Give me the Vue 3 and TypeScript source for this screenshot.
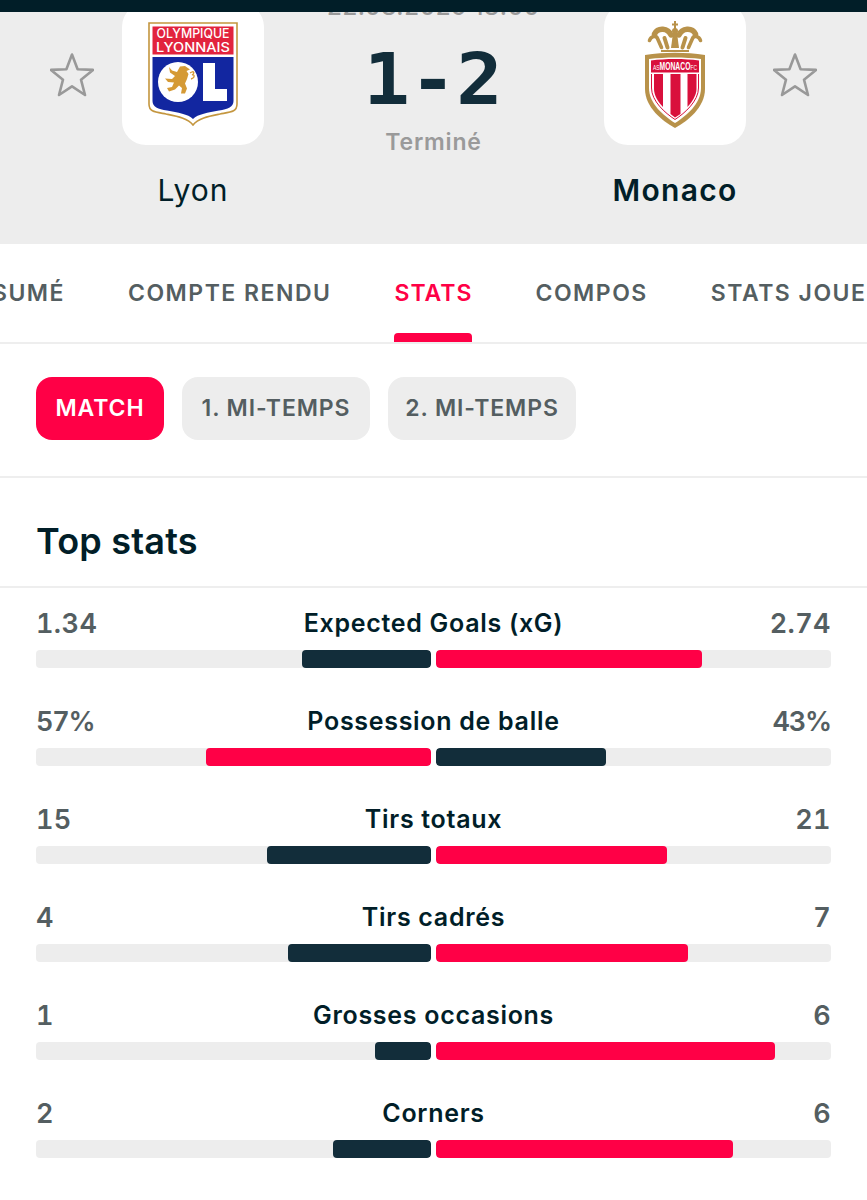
<script setup lang="ts">
interface Stat { label: string; left: string; right: string; leftShare: number; leftRed?: boolean }
const stats: Stat[] = [
  { label: 'Expected Goals (xG)', left: '1.34', right: '2.74', leftShare: 32.6 },
  { label: 'Possession de balle', left: '57%', right: '43%', leftShare: 57, leftRed: true },
  { label: 'Tirs totaux', left: '15', right: '21', leftShare: 41.6 },
  { label: 'Tirs cadrés', left: '4', right: '7', leftShare: 36.3 },
  { label: 'Grosses occasions', left: '1', right: '6', leftShare: 14.2 },
  { label: 'Corners', left: '2', right: '6', leftShare: 24.8 },
]
const tabs = ['RÉSUMÉ', 'COMPTE RENDU', 'STATS', 'COMPOS', 'STATS JOUEURS']
const pills = ['MATCH', '1. MI-TEMPS', '2. MI-TEMPS']
const isPct = (v: string): boolean => v.includes('%')
</script>

<template>
  <div class="page">
    <div class="topbar"></div>
    <header class="header">
      <svg class="star" viewBox="0 0 44 44" aria-hidden="true">
        <path d="M22 1.5 27.6 16.2 43 16.9 31 26.7 35 42 22 33.4 9 42 13 26.7 1 16.9 16.4 16.2Z" />
      </svg>
      <div class="team">
        <div class="card">
          <svg class="crest-ol" viewBox="0 0 90 104">
            <path d="M1 1H89V82C89 90 83 90 72 92C62 94 50 96 45 103C40 96 28 94 18 92C7 90 1 90 1 82Z" fill="#fff" stroke="#c4963f" stroke-width="1.6" />
            <rect x="4.500" y="4.500" width="81" height="28" fill="#e2233d" />
            <text x="45" y="16" class="ol-text" textLength="73" lengthAdjust="spacingAndGlyphs">OLYMPIQUE</text>
            <text x="45" y="29.500" class="ol-text" textLength="74" lengthAdjust="spacingAndGlyphs">LYONNAIS</text>
            <path d="M4.500 35H85.500V79C85.500 85 80 87 71 88.500C60 90.500 50 92 45 97C40 92 30 90.500 19 88.500C10 87 4.500 85 4.500 79Z" fill="#1226a0" />
            <circle cx="30" cy="60" r="20" fill="#fff" />
            <path d="M37 44 32 44.500 29 50 24 48.500 21 45 22 50.500 27 54 24 57 17 56.500 20 60 26 60.500 24 65 19 66 21 69.500 27 67.500 31 63.500 34 66 33 71.500 37 71.500 39 66.500 37 61.500 39 57 40.500 52 38.500 49 42 47.500Z" fill="#d59a35" />
            <path d="M42 51C46 48 47 51 44 53C47 52 47 56 43 57" fill="none" stroke="#d59a35" stroke-width="1.300" />
            <path d="M55 41H67V67H79V79H55Z" fill="#fff" />
          </svg>
        </div>
        <div class="name">Lyon</div>
      </div>
      <div class="centre">
        <div class="date">22.08.2025 18:00</div>
        <div class="score">1-2</div>
        <div class="status">Terminé</div>
      </div>
      <div class="team right">
        <div class="card">
          <svg class="crest-asm" viewBox="0 0 62 108">
            <g fill="#b8924a">
              <rect x="30" y="0" width="2" height="8" />
              <rect x="28" y="2.500" width="6" height="2" />
              <circle cx="31" cy="10" r="3" />
              <path d="M27 27 29 12H33L35 27Z" />
              <rect x="17" y="29" width="28" height="2" />
            </g>
            <g fill="none" stroke="#b8924a" stroke-linecap="round">
              <path d="M27 14C24 7 14 6 10.500 13" stroke-width="5.500" />
              <path d="M35 14C38 7 48 6 51.500 13" stroke-width="5.500" />
              <path d="M5.500 19.500C7 15 12 14 13.500 17.500L17.500 26.500" stroke-width="3.600" />
              <path d="M56.500 19.500C55 15 50 14 48.500 17.500L44.500 26.500" stroke-width="3.600" />
              <path d="M20.500 17 23.500 26.500" stroke-width="4" />
              <path d="M41.500 17 38.500 26.500" stroke-width="4" />
            </g>
            <path d="M1 34C20 31 42 31 61 34V68C61 86 44 100 31 107C18 100 1 86 1 68Z" fill="#b8924a" />
            <path d="M5 38C22 36 40 36 57 38V67C57 83 42 95 31 102C20 95 5 83 5 67Z" fill="#fff" />
            <path d="M7 39.500C22 37.500 40 37.500 55 39.500V51.500H7Z" fill="#d9103c" />
            <text x="31" y="49" class="asm-text" textLength="44" lengthAdjust="spacingAndGlyphs"><tspan class="asm-small">AS</tspan>MONACO<tspan class="asm-small">FC</tspan></text>
            <path d="M10 53H19V86C14 81 10 74 10 68Z" fill="#d9103c" />
            <path d="M26.500 53H36.500V93L31 96.500 26.500 93Z" fill="#d9103c" />
            <path d="M43.500 53H52.500V68C52.500 74 48 81 43.500 86Z" fill="#d9103c" />
            <path d="M7.500 53V67C7.500 80 21 92 31 98.500C41 92 54.500 80 54.500 67V53" fill="none" stroke="#d9103c" stroke-width="1" />
          </svg>
        </div>
        <div class="name strong">Monaco</div>
      </div>
      <svg class="star" viewBox="0 0 44 44" aria-hidden="true">
        <path d="M22 1.5 27.6 16.2 43 16.9 31 26.7 35 42 22 33.4 9 42 13 26.7 1 16.9 16.4 16.2Z" />
      </svg>
    </header>

    <nav class="tabs">
      <div v-for="t in tabs" :key="t" class="tab" :class="{ active: t === 'STATS' }">{{ t }}</div>
    </nav>

    <section class="pills">
      <div v-for="(p, i) in pills" :key="p" class="pill" :class="{ on: i === 0 }">{{ p }}</div>
    </section>

    <h2 class="title">Top stats</h2>

    <section class="rows">
      <div v-for="s in stats" :key="s.label" class="row">
        <div class="row-head">
          <span class="val" :class="{ pct: isPct(s.left) }">{{ s.left }}</span>
          <span class="label">{{ s.label }}</span>
          <span class="val" :class="{ pct: isPct(s.right) }">{{ s.right }}</span>
        </div>
        <div class="bars">
          <div class="track left">
            <div class="fill" :class="s.leftRed ? 'red' : 'dark'" :style="{ width: s.leftShare + '%' }"></div>
          </div>
          <div class="track">
            <div class="fill" :class="s.leftRed ? 'dark' : 'red'" :style="{ width: 100 - s.leftShare + '%' }"></div>
          </div>
        </div>
      </div>
    </section>
  </div>
</template>

<style>
html, body { margin: 0; background: #fff; }
</style>

<style scoped>
.page {
  width: 867px;
  height: 1200px;
  overflow: hidden;
  background: #fff;
  font-family: Inter, "Noto Sans", sans-serif;
  color: #011e28;
}
.topbar { height: 12px; background: #011e28; }
.header {
  height: 232px;
  box-sizing: border-box;
  background: #ededed;
  overflow: hidden;
  display: flex;
  align-items: flex-start;
  padding: 0 50px;
}
.star { width: 44px; height: 44px; margin-top: 41px; flex: none; }
.star path { fill: none; stroke: #999; stroke-width: 2.6; stroke-linejoin: round; }
.team { width: 142px; margin: -9px 28px 0; flex: none; display: flex; flex-direction: column; align-items: center; }
.team.right { margin-left: 29px; margin-right: 27px; }
.card {
  width: 142px;
  height: 142px;
  background: #fff;
  border-radius: 24px;
  position: relative;
}
.crest-ol { position: absolute; left: 26px; top: 19px; width: 90px; height: 104px; }
.crest-asm { position: absolute; left: 40px; top: 18px; width: 62px; height: 108px; }
.ol-text { font-size: 13px; font-weight: 500; fill: #fff; text-anchor: middle; }
.asm-text { font-size: 11px; font-weight: 700; fill: #fff; text-anchor: middle; font-family: "Liberation Sans", sans-serif; }
.asm-small { font-size: 8px; font-weight: 400; }
.name { margin-top: 27px; font-size: 30px; line-height: 36px; font-weight: 400; letter-spacing: 1px; }
.name.strong { font-weight: 600; letter-spacing: 1.3px; }
.centre { flex: 1; display: flex; flex-direction: column; align-items: center; margin: 0 -28px; }
.date { margin-top: -11px; height: 12px; font-size: 24px; line-height: 12px; letter-spacing: 0.6px; color: #9a9a9a; font-weight: 500; white-space: nowrap; }
.score {
  margin-top: 30px;
  font-family: "DejaVu Sans Mono", monospace;
  font-weight: 700;
  font-size: 72px;
  line-height: 72px;
  color: #122d3a;
  transform: scaleX(1.07);
}
.status { margin-top: 13px; font-size: 23px; line-height: 28px; font-weight: 600; letter-spacing: 0.8px; color: #9a9a9a; }

.tabs {
  height: 100px;
  box-sizing: border-box;
  border-bottom: 2px solid #eee;
  display: flex;
  gap: 63px;
  margin-left: -40px;
  white-space: nowrap;
  width: 1100px;
}
.tab {
  position: relative;
  padding-top: 34px;
  font-size: 23px;
  line-height: 30px;
  font-weight: 600;
  letter-spacing: 1.5px;
  color: #545e61;
}
.tab.active { color: #ff0046; letter-spacing: 1px; }
.tab.active::after {
  content: "";
  position: absolute;
  left: 0;
  right: 0;
  bottom: 0;
  height: 9px;
  background: #ff0046;
  border-radius: 4px 4px 0 0;
}

.pills {
  height: 134px;
  box-sizing: border-box;
  padding: 33px 36px 0;
  border-bottom: 2px solid #eee;
  display: flex;
  align-items: flex-start;
  gap: 18px;
}
.pill {
  width: 188px;
  height: 63px;
  border-radius: 16px;
  background: #ededed;
  color: #545e61;
  font-size: 23px;
  font-weight: 600;
  letter-spacing: 0.9px;
  line-height: 62px;
  text-align: center;
}
.pill.on { width: 128px; background: #ff0046; color: #fff; }

.title {
  height: 110px;
  box-sizing: border-box;
  margin: 0;
  padding: 42px 36px 0;
  border-bottom: 2px solid #eee;
  font-size: 36px;
  line-height: 42px;
  font-weight: 600;
  letter-spacing: 0.2px;
}
.rows { padding: 17px 36px 0; }
.row { height: 98px; }
.row-head { display: flex; justify-content: space-between; align-items: center; height: 36px; position: relative; }
.val { font-size: 27px; font-weight: 600; color: #545e61; font-variant-numeric: tabular-nums; letter-spacing: 0.4px; }
.val.pct { letter-spacing: -1.2px; }
.label {
  position: absolute;
  left: 0;
  right: 0;
  text-align: center;
  font-size: 25px;
  font-weight: 600;
  letter-spacing: 0.7px;
}
.bars { display: flex; gap: 5px; margin-top: 9px; }
.track { flex: 1; height: 18px; background: #ededed; border-radius: 4px; overflow: hidden; display: flex; }
.track.left { justify-content: flex-end; }
.fill { height: 100%; border-radius: 4px; }
.fill.red { background: #ff0046; }
.fill.dark { background: #122d3a; }
</style>
